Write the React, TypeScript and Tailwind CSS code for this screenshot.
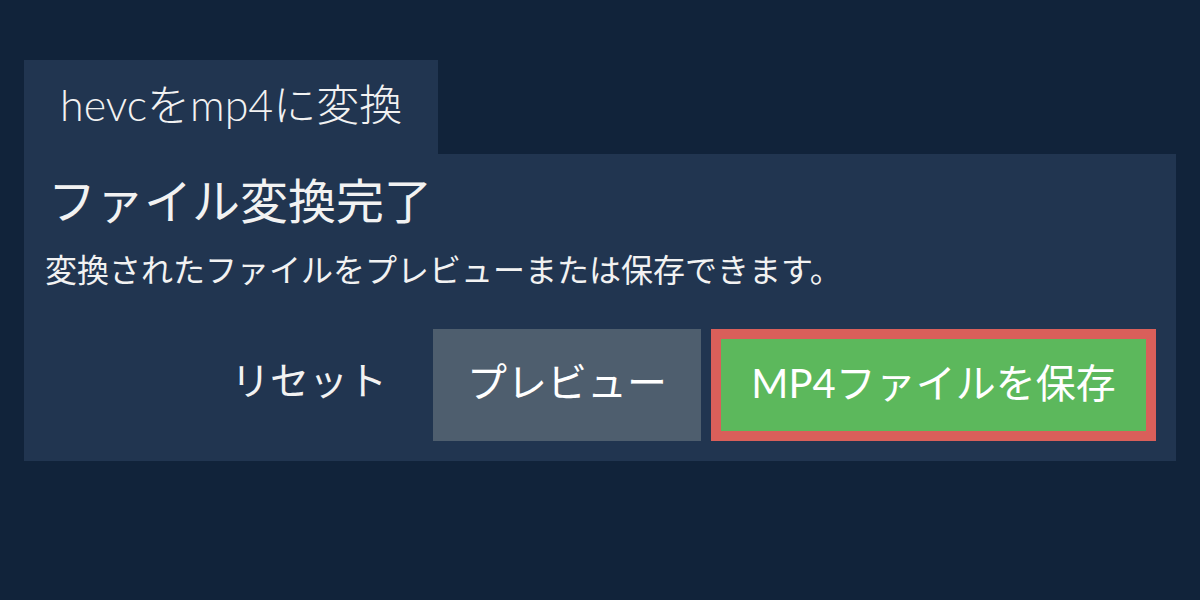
import React from 'react'

const font = { fontFamily: 'Lato, "Noto Sans CJK JP", sans-serif' }

export default function App() {
  return (
    <div className="w-[1200px] h-[600px] bg-[#11233a] px-6 pt-[60px] text-[#f2f2f2]" style={font}>
      {/* タブ */}
      <div className="inline-flex h-[94px] items-center bg-[#213550] px-9 pb-[6px]">
        <span className="text-[43px] font-light leading-none">hevcをmp4に変換</span>
      </div>

      {/* 完了パネル */}
      <div className="bg-[#213550] pl-6 pr-5 pt-[18px] pb-5">
        <h1 className="text-[48px] leading-[1.2] font-normal">ファイル変換完了</h1>
        <p className="mt-[16px] -ml-[3px] text-[32px] leading-[1.5]">変換されたファイルをプレビューまたは保存できます。</p>

        <div className="mt-[35px] flex justify-end gap-[10px]">
          <button className="h-[112px] px-[36px] pb-[8px] text-[39px] text-[#f2f2f2]">リセット</button>
          <button className="h-[112px] w-[268px] pb-[6px] bg-[#4e5e6e] text-[40px] text-white">プレビュー</button>
          <button className="h-[112px] w-[445px] pb-[4px] border-[10px] border-[#d95f5a] bg-[#5cb85c] text-[40px] text-white">
            MP4ファイルを保存
          </button>
        </div>
      </div>
    </div>
  )
}
